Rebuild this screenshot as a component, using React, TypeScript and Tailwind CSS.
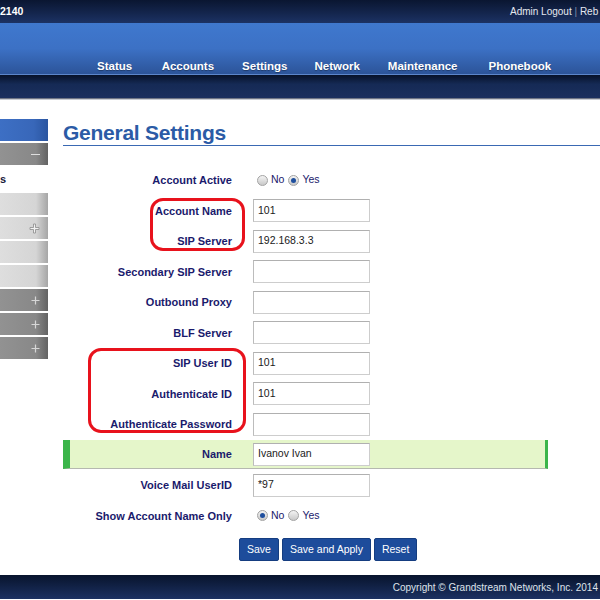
import React from "react";

function Radio({ checked }: { checked?: boolean }) {
  return (
    <span className="inline-flex items-center justify-center w-[11px] h-[11px] rounded-full border border-[#a3a3a3] bg-gradient-to-b from-[#f4f4f4] to-[#c9c9c9]">
      {checked && <span className="w-[5px] h-[5px] rounded-full bg-[#1f4f9e]" />}
    </span>
  );
}

function Input({ value }: { value?: string }) {
  return (
    <div className="ml-[21px] w-[117px] h-[23px] border border-[#cdcdcd] border-t-[#b0b0b0] border-l-[#bcbcbc] bg-white flex items-center pl-[4px] text-[10.5px] text-[#1a1a1a]">
      {value}
    </div>
  );
}

function Label({ children, w = "w-[169px]" }: { children: React.ReactNode; w?: string }) {
  return <div className={`${w} shrink-0 text-right text-[11px] font-bold text-[#1a1a6c] whitespace-nowrap`}>{children}</div>;
}

function Row({ label, value }: { label: string; value?: string }) {
  return (
    <div className="h-[30.5px] flex items-center">
      <Label>{label}</Label>
      <Input value={value} />
    </div>
  );
}

function RadioRow({ label, yes }: { label: string; yes: boolean }) {
  return (
    <div className="h-[30.5px] flex items-center">
      <Label>{label}</Label>
      <div className="ml-[25px] flex items-center text-[10.5px] text-[#1a1a6c]">
        <Radio checked={!yes} />
        <span className="ml-[3px] mr-[4px]">No</span>
        <Radio checked={yes} />
        <span className="ml-[3px]">Yes</span>
      </div>
    </div>
  );
}

function PlusOutline() {
  return (
    <svg width="11" height="11" viewBox="0 0 11 11">
      <path d="M4.5 1h2v3.5H10v2H6.5V10h-2V6.5H1v-2h3.5z" fill="#f2f2f2" stroke="#8c8c8c" strokeWidth="0.8" />
    </svg>
  );
}

function PlusWhite() {
  return (
    <svg width="9" height="9" viewBox="0 0 9 9">
      <path d="M4.5 0.5v8M0.5 4.5h8" stroke="#d6d6d6" strokeWidth="1.2" />
    </svg>
  );
}

function SideLight({ children }: { children?: React.ReactNode }) {
  return (
    <div className="h-[22px] flex items-center justify-end pr-[8px] bg-gradient-to-r from-[#dedede] via-[#d5d5d5] via-75% to-[#a6a6a6]">
      {children}
    </div>
  );
}

function SideDark({ children }: { children?: React.ReactNode }) {
  return (
    <div className="h-[22px] flex items-center justify-end pr-[8px] bg-gradient-to-r from-[#929292] via-[#888888] via-75% to-[#636363]">
      {children}
    </div>
  );
}

export default function App() {
  return (
    <div className="w-[600px] h-[600px] overflow-hidden bg-white font-['Liberation_Sans',Arial,sans-serif]">
      {/* top bar */}
      <div className="h-[23px] bg-gradient-to-b from-[#0a1631] to-[#1c3264] flex items-center justify-between text-white">
        <span className="text-[10.5px] font-bold leading-none">2140</span>
        <div className="w-[90px] whitespace-nowrap text-[10px] text-[#e4e8f0] leading-none">
          Admin Logout <span className="text-[#7f8cab]">|</span> Reb
        </div>
      </div>
      {/* blue band */}
      <div className="h-[52px] bg-gradient-to-b from-[#3f78ce] via-[#3c71c5] to-[#2c5499] flex items-end pb-[1px] border-b border-[#5c86cb]">
        <nav className="ml-[97px] flex gap-[27px] text-[11.5px] font-bold text-white leading-[14px] [text-shadow:0_1px_1px_rgba(0,0,0,0.35)]">
          <span>Status</span>
          <span className="ml-[2.5px]">Accounts</span>
          <span className="ml-[1px]">Settings</span>
          <span>Network</span>
          <span className="ml-[1px]">Maintenance</span>
          <span className="ml-[4px]">Phonebook</span>
        </nav>
      </div>
      {/* dark bar */}
      <div className="h-[23px] bg-gradient-to-b from-[#07122a] via-[#152a55] via-40% to-[#1b2f5e]" />
      <div className="h-[1px] bg-[#6f7585]" />
      <div className="h-[1px] bg-[#c9ccd2]" />

      {/* main */}
      <div className="relative h-[475px] flex">
        {/* sidebar */}
        <div className="w-[48px] shrink-0 mt-[19px] flex flex-col gap-[2px]">
          <div className="h-[22px] bg-gradient-to-r from-[#3d6fc4] via-[#3867b9] via-70% to-[#2a55a0]" />
          <SideDark>
            <span className="block w-[9px] h-[1px] bg-[#dedede]" />
          </SideDark>
          <div className="h-[24px] flex items-center text-[11px] font-bold text-[#1a1a3a]">s</div>
          <SideLight />
          <SideLight>
            <PlusOutline />
          </SideLight>
          <SideLight />
          <SideLight />
          <SideDark>
            <PlusWhite />
          </SideDark>
          <SideDark>
            <PlusWhite />
          </SideDark>
          <SideDark>
            <PlusWhite />
          </SideDark>
        </div>

        {/* content */}
        <div className="ml-[15px] flex-1 pt-[21px]">
          <h1 className="h-[25px] leading-[24px] text-[21px] font-bold text-[#2b5ba6] tracking-[-0.25px] border-b border-[#3a69b3]">
            General Settings
          </h1>
          <div className="mt-[19px]">
            <RadioRow label="Account Active" yes={true} />
            <Row label="Account Name" value="101" />
            <Row label="SIP Server" value="192.168.3.3" />
            <Row label="Secondary SIP Server" />
            <Row label="Outbound Proxy" />
            <Row label="BLF Server" />
            <Row label="SIP User ID" value="101" />
            <Row label="Authenticate ID" value="101" />
            <Row label="Authenticate Password" />
            <div className="h-[30.5px] flex items-center">
              <div className="w-[485px] h-[29px] flex items-center bg-[#e5f6ca] border-l-[7px] border-r-[3px] border-l-[#3bb54a] border-r-[#3bb54a] border-b border-b-[#b5b8b0]">
                <Label w="w-[162px]">Name</Label>
                <Input value="Ivanov Ivan" />
              </div>
            </div>
            <Row label="Voice Mail UserID" value="*97" />
            <RadioRow label="Show Account Name Only" yes={false} />
          </div>
          <div className="mt-[7px] ml-[176px] flex gap-[3px] text-[10.5px] text-white">
            <button className="h-[23px] px-[7px] bg-[#1d4c9b] border border-[#153d80] rounded-[2px]">Save</button>
            <button className="h-[23px] px-[7px] bg-[#1d4c9b] border border-[#153d80] rounded-[2px]">Save and Apply</button>
            <button className="h-[23px] px-[7px] bg-[#1d4c9b] border border-[#153d80] rounded-[2px]">Reset</button>
          </div>
        </div>

        {/* red highlight outlines */}
        <div className="absolute left-[150px] top-[98px] w-[95px] h-[53px] border-[3px] border-[#e8121c] rounded-[13px] pointer-events-none" />
        <div className="absolute left-[88px] top-[248px] w-[158px] h-[85px] border-[3px] border-[#e8121c] rounded-[13px] pointer-events-none" />
      </div>

      {/* footer */}
      <div className="h-[24px] bg-gradient-to-b from-[#08142d] to-[#1c3162] flex items-center justify-end pr-[2px] pt-[2px] text-[10px] text-[#dfe3ea] leading-none">
        Copyright © Grandstream Networks, Inc. 2014
      </div>
    </div>
  );
}
